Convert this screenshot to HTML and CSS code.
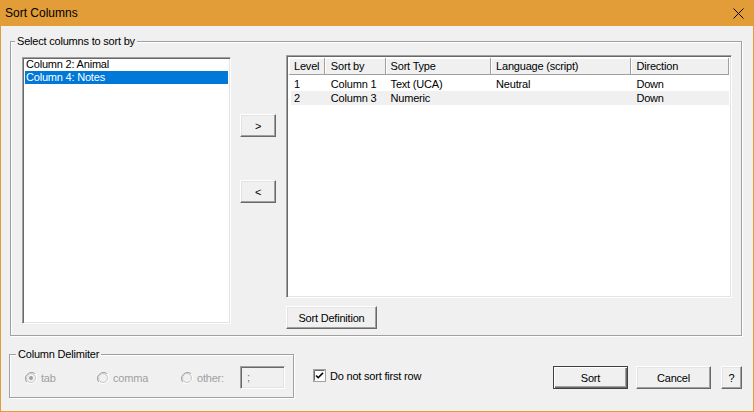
FILE: index.html
```html
<!DOCTYPE html>
<html lang="en">
<head>
    <meta charset="UTF-8">
    <title>Sort Columns</title>
    <link rel="stylesheet" href="styles.css">
</head>
<body>
    <div class="window">
        <div class="titlebar">
            <span class="title">Sort Columns</span>
            <svg class="close-icon" width="11" height="11" viewBox="0 0 11 11">
                <path d="M0.5 0.5 L10.5 10.5 M10.5 0.5 L0.5 10.5" stroke="#000" stroke-width="1" fill="none"/>
            </svg>
        </div>

        <div class="dialog">
            <fieldset class="group main-group">
                <legend>Select columns to sort by</legend>
                <div class="main-row">
                    <div class="listbox">
                        <div class="list-item">Column 2: Animal</div>
                        <div class="list-item selected">Column 4: Notes</div>
                    </div>

                    <div class="move-buttons">
                        <button class="btn move-btn">&gt;</button>
                        <button class="btn move-btn">&lt;</button>
                    </div>

                    <div class="sort-panel">
                        <div class="listview">
                            <div class="lv-header">
                                <div class="lv-col col-level">Level</div>
                                <div class="lv-col col-by">Sort by</div>
                                <div class="lv-col col-type">Sort Type</div>
                                <div class="lv-col col-lang">Language (script)</div>
                                <div class="lv-col col-dir">Direction</div>
                            </div>
                            <div class="lv-body">
                                <div class="lv-row">
                                    <div class="lv-cell col-level">1</div>
                                    <div class="lv-cell col-by">Column 1</div>
                                    <div class="lv-cell col-type">Text (UCA)</div>
                                    <div class="lv-cell col-lang">Neutral</div>
                                    <div class="lv-cell col-dir">Down</div>
                                </div>
                                <div class="lv-row shaded">
                                    <div class="lv-cell col-level">2</div>
                                    <div class="lv-cell col-by">Column 3</div>
                                    <div class="lv-cell col-type">Numeric</div>
                                    <div class="lv-cell col-lang"></div>
                                    <div class="lv-cell col-dir">Down</div>
                                </div>
                            </div>
                        </div>
                        <button class="btn def-btn">Sort Definition</button>
                    </div>
                </div>
            </fieldset>

            <div class="bottom-row">
                <fieldset class="group delim-group">
                    <legend>Column Delimiter</legend>
                    <div class="delim-row">
                        <label class="radio radio-tab">
                            <svg width="12" height="12" viewBox="0 0 12 12">
                                <path d="M10.2 1.8 A6 6 0 0 0 1.8 10.2" stroke="#a0a0a0" fill="none"/>
                                <path d="M1.8 10.2 A6 6 0 0 0 10.2 1.8" stroke="#fff" fill="none"/>
                                <circle cx="6" cy="6" r="4.5" fill="#f0f0f0" stroke="#c8c8c8"/>
                                <circle cx="6" cy="6" r="2" fill="#a0a0a0"/>
                            </svg>
                            <span>tab</span>
                        </label>
                        <label class="radio radio-comma">
                            <svg width="12" height="12" viewBox="0 0 12 12">
                                <path d="M10.2 1.8 A6 6 0 0 0 1.8 10.2" stroke="#a0a0a0" fill="none"/>
                                <path d="M1.8 10.2 A6 6 0 0 0 10.2 1.8" stroke="#fff" fill="none"/>
                                <circle cx="6" cy="6" r="4.5" fill="#f0f0f0" stroke="#c8c8c8"/>
                            </svg>
                            <span>comma</span>
                        </label>
                        <label class="radio radio-other">
                            <svg width="12" height="12" viewBox="0 0 12 12">
                                <path d="M10.2 1.8 A6 6 0 0 0 1.8 10.2" stroke="#a0a0a0" fill="none"/>
                                <path d="M1.8 10.2 A6 6 0 0 0 10.2 1.8" stroke="#fff" fill="none"/>
                                <circle cx="6" cy="6" r="4.5" fill="#f0f0f0" stroke="#c8c8c8"/>
                            </svg>
                            <span>other:</span>
                        </label>
                        <div class="other-input">;</div>
                    </div>
                </fieldset>

                <label class="check">
                    <svg width="13" height="13" viewBox="0 0 13 13">
                        <rect x="0.5" y="0.5" width="12" height="12" fill="#fff" stroke="#a0a0a0"/>
                        <path d="M1.5 11.5 V1.5 H11.5" stroke="#696969" fill="none"/>
                        <path d="M3 6.5 L5.2 8.7 L10 3.9" stroke="#000" stroke-width="1.6" fill="none"/>
                    </svg>
                    <span>Do not sort first row</span>
                </label>

                <div class="actions">
                    <button class="btn action-btn default-btn">Sort</button>
                    <button class="btn action-btn">Cancel</button>
                    <button class="btn help-btn">?</button>
                </div>
            </div>
        </div>
    </div>
</body>
</html>
```

FILE: styles.css
```css
* {
    box-sizing: border-box;
}

body {
    margin: 0;
    font-family: "Liberation Sans", Arial, sans-serif;
    font-size: 11px;
    letter-spacing: -0.2px;
    color: #000;
    background-color: #f0f0f0;
}

.window {
    width: 754px;
    height: 412px;
    display: flex;
    flex-direction: column;
    background-color: #f0f0f0;
}

.titlebar {
    height: 26px;
    flex-shrink: 0;
    background-color: #e39d38;
    display: flex;
    align-items: center;
    justify-content: space-between;
    padding: 0 10px 0 5px;
}

.title {
    font-size: 12px;
    letter-spacing: 0;
}

.dialog {
    flex: 1;
    border: 1px solid #e39d38;
    border-top: none;
    padding: 9px 11px 0 9px;
}

/* group boxes */
.group {
    margin: 0;
    min-width: 0;
    border: 1px solid #a0a0a0;
    box-shadow: 1px 1px 0 #fff, inset 1px 1px 0 #fff;
}

.group legend {
    line-height: 13px;
    padding: 0 2px;
    background-color: #f0f0f0;
}

.main-group {
    padding: 7px 9px 6px 11px;
}

.main-group legend {
    margin-left: -7px;
}

.main-row {
    display: flex;
}

/* sunken boxes */
.listbox,
.listview,
.other-input {
    border: 1px solid;
    border-color: #a0a0a0 #fff #fff #a0a0a0;
    box-shadow: inset 1px 1px 0 #696969, inset -1px -1px 0 #e3e3e3;
}

.listbox {
    width: 209px;
    height: 267px;
    margin-top: 2px;
    background-color: #fff;
    padding: 0 2px;
}

.list-item {
    height: 13px;
    line-height: 13px;
    padding-left: 1px;
    white-space: nowrap;
}

.list-item.selected {
    background-color: #0078d7;
    color: #fff;
}

/* buttons */
.btn {
    font-family: inherit;
    font-size: 11px;
    letter-spacing: -0.2px;
    color: #000;
    background-color: #f0f0f0;
    border: 1px solid;
    border-color: #fff #696969 #696969 #fff;
    box-shadow: inset -1px -1px 0 #a0a0a0, inset 1px 1px 0 #e3e3e3;
    padding: 0;
    height: 23px;
    cursor: pointer;
}

.move-buttons {
    width: 36px;
    margin-left: 9px;
    margin-right: 10px;
    display: flex;
    flex-direction: column;
    padding-top: 59px;
    gap: 43px;
}

.move-btn {
    width: 36px;
}

.sort-panel {
    width: 446px;
    display: flex;
    flex-direction: column;
    align-items: flex-start;
}

.listview {
    width: 446px;
    height: 243px;
    background-color: #fff;
    padding: 2px;
}

.lv-header,
.lv-row {
    display: flex;
}

.lv-col {
    height: 17px;
    line-height: 16px;
    padding-left: 5px;
    background-color: #f0f0f0;
    border-right: 1px solid #a0a0a0;
    border-bottom: 1px solid #a0a0a0;
    box-shadow: inset 1px 1px 0 #fff;
    white-space: nowrap;
}

.lv-body {
    padding-top: 2px;
}

.lv-row {
    height: 14px;
    line-height: 14px;
}

.lv-row.shaded {
    background-color: #f0f0f0;
    margin-left: 2px;
}

.lv-row.shaded .col-level {
    width: 34px;
    padding-left: 3px;
}

.lv-cell {
    padding-left: 5px;
    white-space: nowrap;
}

.col-level { width: 36px; }
.col-by { width: 61px; padding-left: 6px; }
.col-type { width: 106px; }
.col-lang { width: 141px; }
.col-dir { width: 98px; }

.def-btn {
    width: 91px;
    margin-top: 8px;
}

/* bottom area */
.bottom-row {
    display: flex;
    align-items: flex-start;
    margin-top: 12px;
}

.delim-group {
    width: 285px;
    margin-left: -1px;
    padding: 5px 8px 8px 15px;
}

.delim-group legend {
    margin-left: -9px;
}

.delim-row {
    display: flex;
    align-items: center;
    height: 23px;
}

.radio {
    display: flex;
    align-items: center;
    gap: 4px;
    color: #a0a0a0;
}

.radio-tab { width: 72px; }
.radio-comma { width: 84px; }
.radio-other { width: 59px; }

.other-input {
    width: 45px;
    height: 23px;
    line-height: 21px;
    padding-left: 6px;
    background-color: #f0f0f0;
    color: #6d6d6d;
}

.check {
    display: flex;
    align-items: center;
    gap: 4px;
    margin-left: 19px;
    margin-top: 21px;
    height: 13px;
}

.actions {
    margin-left: auto;
    margin-top: 18px;
    display: flex;
}

.action-btn {
    width: 75px;
    margin-right: 8px;
}

.action-btn + .action-btn {
    margin-right: 10px;
}

.default-btn {
    border: 1px solid #404040;
    box-shadow: inset 1px 1px 0 #fff, inset -1px -1px 0 #696969, inset -2px -2px 0 #a0a0a0;
}

.help-btn {
    width: 21px;
}
```
